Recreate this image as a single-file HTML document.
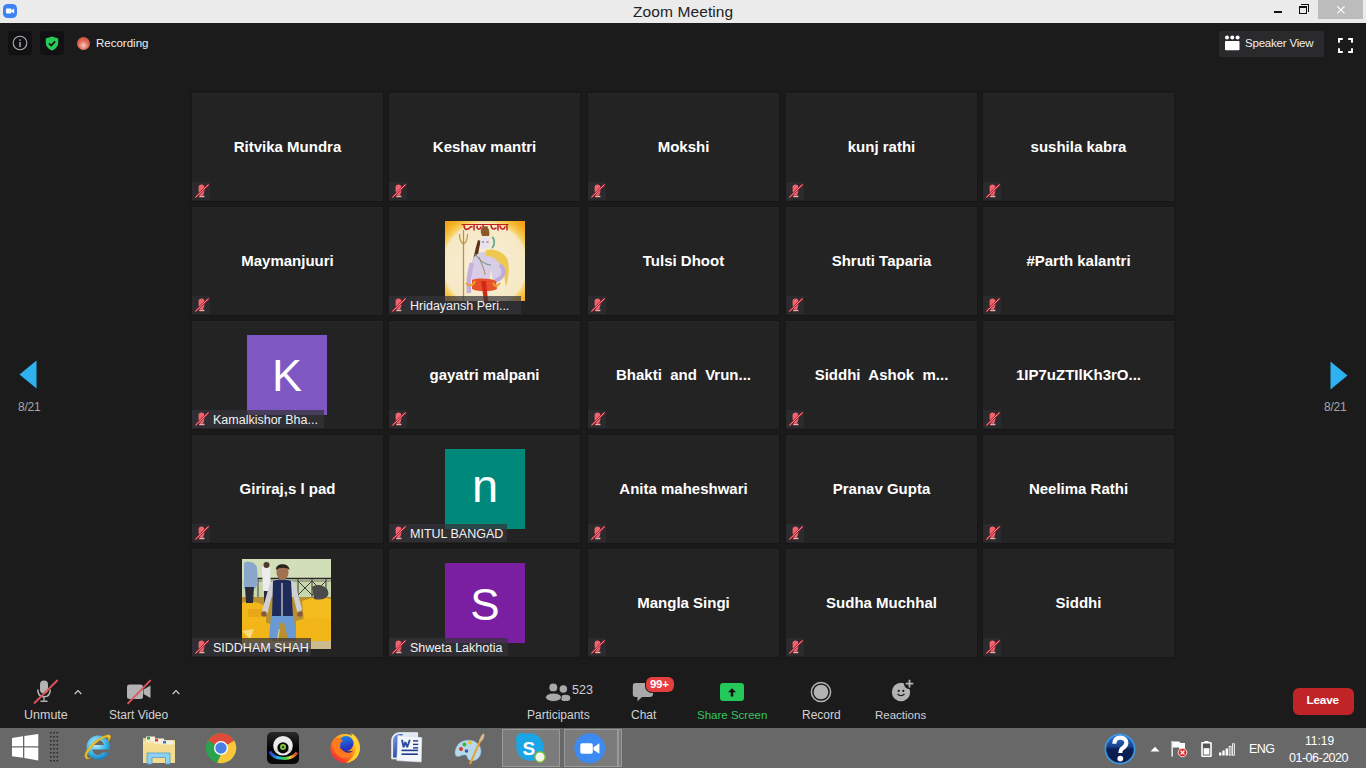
<!DOCTYPE html>
<html><head><meta charset="utf-8">
<style>
*{margin:0;padding:0;box-sizing:border-box}
html,body{width:1366px;height:768px;overflow:hidden;background:#1b1b1c;font-family:"Liberation Sans",sans-serif;position:relative}
.a{position:absolute}
svg{display:block}
#title{left:0;top:0;width:1366px;height:23px;background:#ebebeb}
#title .t{left:633px;top:3px;font-size:15.5px;color:#222;letter-spacing:0.1px;white-space:nowrap}
.tile{position:absolute;width:191px;height:108px;background:#232324;border-top:1px solid #262627;box-shadow:0 0 0 1px #171718,0 0 0 3px #1a1a1b}
.nm{position:absolute;left:0;top:44px;width:191px;text-align:center;color:#fff;font-weight:bold;font-size:15px;line-height:18px;white-space:nowrap}
.mic{position:absolute;left:0;top:88px;width:18px;height:18px;background:#2b2a2d}
.mic svg,.mic2 svg{position:absolute;left:0;top:0}
.mic2{position:absolute;left:0;top:0;width:19px;height:19px}
.lbl{position:absolute;left:0;top:88px;height:18px;background:rgba(52,51,55,0.72)}
.lbl span{position:absolute;left:21px;top:3px;color:#f2f2f2;font-size:12.5px;white-space:nowrap}
.av{position:absolute;left:55px;top:13px;width:80px;height:80px;color:#fff;font-size:46px;text-align:center;line-height:80px}
.tb{position:absolute;color:#d2d2d2;font-size:12px;white-space:nowrap;line-height:14px}
.tk{position:absolute;top:728px}
</style></head><body>
<div id="title" class="a">
  <svg class="a" style="left:3px;top:4px" width="14" height="14" viewBox="0 0 14 14"><rect x="0" y="0" width="14" height="14" rx="4.5" fill="#3d83f3"/><rect x="3" y="4.6" width="5.6" height="4.8" rx="0.8" fill="#fff"/><path d="M8.4 6.4 L11.2 4.6 V9.4 L8.4 7.6Z" fill="#fff"/></svg>
  <div class="a t">Zoom Meeting</div>
  <div class="a" style="left:1274px;top:11px;width:8px;height:2px;background:#111"></div>
  <div class="a" style="left:1301px;top:4px;width:8px;height:8px;border:1px solid #111;border-left:none;border-bottom:none"></div>
  <div class="a" style="left:1299px;top:6px;width:8px;height:8px;border:1px solid #111;border-top-width:2px;background:#ebebeb"></div>
  <div class="a" style="left:1318px;top:0;width:45px;height:19px;background:#bdbcbd"></div>
  <svg class="a" style="left:1336px;top:6px" width="10" height="8" viewBox="0 0 10 8"><path d="M1.2 0.3 L8.6 7.3 M8.6 0.3 L1.2 7.3" stroke="#fff" stroke-width="1.1"/></svg>
</div>

<!-- top bar -->
<div class="a" style="left:8px;top:31px;width:24px;height:24px;background:#111113;border-radius:4px"></div>
<svg class="a" style="left:12px;top:35px" width="16" height="16" viewBox="0 0 16 16"><circle cx="8" cy="8" r="6.8" fill="none" stroke="#b4b4b4" stroke-width="1.1"/><rect x="7.3" y="7" width="1.4" height="5" fill="#b4b4b4"/><circle cx="8" cy="5" r="0.85" fill="#b4b4b4"/></svg>
<div class="a" style="left:40px;top:31px;width:24px;height:24px;background:#111113;border-radius:4px"></div>
<svg class="a" style="left:45px;top:36px" width="14" height="15" viewBox="0 0 14 15"><path d="M7 0.5 L13.2 2.6 V7 C13.2 10.6 10.4 13.2 7 14.5 C3.6 13.2 0.8 10.6 0.8 7 V2.6Z" fill="#29c95a"/><path d="M4 7.4 L6.2 9.6 L10.2 5.4" fill="none" stroke="#111" stroke-width="1.6"/></svg>
<div class="a" style="left:77px;top:37px;width:13px;height:13px;border-radius:50%;background:radial-gradient(circle at 50% 65%,#f4c9c0 0%,#e36a55 45%,#b8402f 100%)"></div>
<div class="tb" style="left:96px;top:36px;font-size:11.5px;color:#f0f0f0">Recording</div>

<div class="a" style="left:1219px;top:31px;width:105px;height:26px;background:#2a2a2c;border-radius:2px"></div>
<svg class="a" style="left:1225px;top:35px" width="15" height="16" viewBox="0 0 15 16"><circle cx="2" cy="2.6" r="2" fill="#fff"/><circle cx="7.3" cy="2.6" r="2" fill="#fff"/><circle cx="12.6" cy="2.6" r="2" fill="#fff"/><rect x="0" y="6" width="14.5" height="9.3" rx="0.8" fill="#fff"/></svg>
<div class="tb" style="left:1245px;top:36px;font-size:11.5px;color:#f0f0f0;letter-spacing:-0.2px">Speaker View</div>
<svg class="a" style="left:1337.5px;top:37.5px" width="15" height="15" viewBox="0 0 15 15"><path d="M1 4.8 V1 H4.8 M10.2 1 H14 V4.8 M14 10.2 V14 H10.2 M4.8 14 H1 V10.2" fill="none" stroke="#fff" stroke-width="1.9"/></svg>

<!-- arrows -->
<svg class="a" style="left:18.5px;top:360px" width="18" height="29" viewBox="0 0 18 29"><path d="M0.5 14.5 L17.5 0.5 V28.5Z" fill="#2eb1f0"/></svg>
<div class="tb" style="left:18px;top:400px;font-size:12px;letter-spacing:-0.2px;color:#a6a6a6">8/21</div>
<svg class="a" style="left:1330px;top:361px" width="18" height="29" viewBox="0 0 18 29"><path d="M17.5 14.5 L0.5 0.5 V28.5Z" fill="#2eb1f0"/></svg>
<div class="tb" style="left:1324px;top:400px;font-size:12px;letter-spacing:-0.2px;color:#a6a6a6">8/21</div>

<div class="tile" style="left:192px;top:93px"><div class="nm">Ritvika Mundra</div><div class="mic"><svg width="19" height="18" viewBox="0 0 19 18"><path d="M6.6 5 C6.6 3.2 7.8 2.4 9.5 2.4 C11.2 2.4 12.4 3.2 12.4 5 V8.5 C12.4 10.5 11.6 11.8 11 13.4 H8 C7.4 11.8 6.6 10.5 6.6 8.5Z" fill="#f0646e"/><rect x="7.2" y="13.7" width="5.2" height="1.5" fill="#f4a8a8"/><path d="M3.4 15.4 L16.6 2.5" stroke="#a81c2c" stroke-width="2.1"/><path d="M3.4 15.4 L16.6 2.5" stroke="#ff98a0" stroke-width="0.9"/></svg></div></div>
<div class="tile" style="left:389px;top:93px"><div class="nm">Keshav mantri</div><div class="mic"><svg width="19" height="18" viewBox="0 0 19 18"><path d="M6.6 5 C6.6 3.2 7.8 2.4 9.5 2.4 C11.2 2.4 12.4 3.2 12.4 5 V8.5 C12.4 10.5 11.6 11.8 11 13.4 H8 C7.4 11.8 6.6 10.5 6.6 8.5Z" fill="#f0646e"/><rect x="7.2" y="13.7" width="5.2" height="1.5" fill="#f4a8a8"/><path d="M3.4 15.4 L16.6 2.5" stroke="#a81c2c" stroke-width="2.1"/><path d="M3.4 15.4 L16.6 2.5" stroke="#ff98a0" stroke-width="0.9"/></svg></div></div>
<div class="tile" style="left:588px;top:93px"><div class="nm">Mokshi</div><div class="mic"><svg width="19" height="18" viewBox="0 0 19 18"><path d="M6.6 5 C6.6 3.2 7.8 2.4 9.5 2.4 C11.2 2.4 12.4 3.2 12.4 5 V8.5 C12.4 10.5 11.6 11.8 11 13.4 H8 C7.4 11.8 6.6 10.5 6.6 8.5Z" fill="#f0646e"/><rect x="7.2" y="13.7" width="5.2" height="1.5" fill="#f4a8a8"/><path d="M3.4 15.4 L16.6 2.5" stroke="#a81c2c" stroke-width="2.1"/><path d="M3.4 15.4 L16.6 2.5" stroke="#ff98a0" stroke-width="0.9"/></svg></div></div>
<div class="tile" style="left:786px;top:93px"><div class="nm">kunj rathi</div><div class="mic"><svg width="19" height="18" viewBox="0 0 19 18"><path d="M6.6 5 C6.6 3.2 7.8 2.4 9.5 2.4 C11.2 2.4 12.4 3.2 12.4 5 V8.5 C12.4 10.5 11.6 11.8 11 13.4 H8 C7.4 11.8 6.6 10.5 6.6 8.5Z" fill="#f0646e"/><rect x="7.2" y="13.7" width="5.2" height="1.5" fill="#f4a8a8"/><path d="M3.4 15.4 L16.6 2.5" stroke="#a81c2c" stroke-width="2.1"/><path d="M3.4 15.4 L16.6 2.5" stroke="#ff98a0" stroke-width="0.9"/></svg></div></div>
<div class="tile" style="left:983px;top:93px"><div class="nm">sushila kabra</div><div class="mic"><svg width="19" height="18" viewBox="0 0 19 18"><path d="M6.6 5 C6.6 3.2 7.8 2.4 9.5 2.4 C11.2 2.4 12.4 3.2 12.4 5 V8.5 C12.4 10.5 11.6 11.8 11 13.4 H8 C7.4 11.8 6.6 10.5 6.6 8.5Z" fill="#f0646e"/><rect x="7.2" y="13.7" width="5.2" height="1.5" fill="#f4a8a8"/><path d="M3.4 15.4 L16.6 2.5" stroke="#a81c2c" stroke-width="2.1"/><path d="M3.4 15.4 L16.6 2.5" stroke="#ff98a0" stroke-width="0.9"/></svg></div></div>
<div class="tile" style="left:192px;top:207px"><div class="nm">Maymanjuuri</div><div class="mic"><svg width="19" height="18" viewBox="0 0 19 18"><path d="M6.6 5 C6.6 3.2 7.8 2.4 9.5 2.4 C11.2 2.4 12.4 3.2 12.4 5 V8.5 C12.4 10.5 11.6 11.8 11 13.4 H8 C7.4 11.8 6.6 10.5 6.6 8.5Z" fill="#f0646e"/><rect x="7.2" y="13.7" width="5.2" height="1.5" fill="#f4a8a8"/><path d="M3.4 15.4 L16.6 2.5" stroke="#a81c2c" stroke-width="2.1"/><path d="M3.4 15.4 L16.6 2.5" stroke="#ff98a0" stroke-width="0.9"/></svg></div></div>
<div class="tile" style="left:588px;top:207px"><div class="nm">Tulsi Dhoot</div><div class="mic"><svg width="19" height="18" viewBox="0 0 19 18"><path d="M6.6 5 C6.6 3.2 7.8 2.4 9.5 2.4 C11.2 2.4 12.4 3.2 12.4 5 V8.5 C12.4 10.5 11.6 11.8 11 13.4 H8 C7.4 11.8 6.6 10.5 6.6 8.5Z" fill="#f0646e"/><rect x="7.2" y="13.7" width="5.2" height="1.5" fill="#f4a8a8"/><path d="M3.4 15.4 L16.6 2.5" stroke="#a81c2c" stroke-width="2.1"/><path d="M3.4 15.4 L16.6 2.5" stroke="#ff98a0" stroke-width="0.9"/></svg></div></div>
<div class="tile" style="left:786px;top:207px"><div class="nm">Shruti Taparia</div><div class="mic"><svg width="19" height="18" viewBox="0 0 19 18"><path d="M6.6 5 C6.6 3.2 7.8 2.4 9.5 2.4 C11.2 2.4 12.4 3.2 12.4 5 V8.5 C12.4 10.5 11.6 11.8 11 13.4 H8 C7.4 11.8 6.6 10.5 6.6 8.5Z" fill="#f0646e"/><rect x="7.2" y="13.7" width="5.2" height="1.5" fill="#f4a8a8"/><path d="M3.4 15.4 L16.6 2.5" stroke="#a81c2c" stroke-width="2.1"/><path d="M3.4 15.4 L16.6 2.5" stroke="#ff98a0" stroke-width="0.9"/></svg></div></div>
<div class="tile" style="left:983px;top:207px"><div class="nm">#Parth kalantri</div><div class="mic"><svg width="19" height="18" viewBox="0 0 19 18"><path d="M6.6 5 C6.6 3.2 7.8 2.4 9.5 2.4 C11.2 2.4 12.4 3.2 12.4 5 V8.5 C12.4 10.5 11.6 11.8 11 13.4 H8 C7.4 11.8 6.6 10.5 6.6 8.5Z" fill="#f0646e"/><rect x="7.2" y="13.7" width="5.2" height="1.5" fill="#f4a8a8"/><path d="M3.4 15.4 L16.6 2.5" stroke="#a81c2c" stroke-width="2.1"/><path d="M3.4 15.4 L16.6 2.5" stroke="#ff98a0" stroke-width="0.9"/></svg></div></div>
<div class="tile" style="left:389px;top:321px"><div class="nm">gayatri malpani</div><div class="mic"><svg width="19" height="18" viewBox="0 0 19 18"><path d="M6.6 5 C6.6 3.2 7.8 2.4 9.5 2.4 C11.2 2.4 12.4 3.2 12.4 5 V8.5 C12.4 10.5 11.6 11.8 11 13.4 H8 C7.4 11.8 6.6 10.5 6.6 8.5Z" fill="#f0646e"/><rect x="7.2" y="13.7" width="5.2" height="1.5" fill="#f4a8a8"/><path d="M3.4 15.4 L16.6 2.5" stroke="#a81c2c" stroke-width="2.1"/><path d="M3.4 15.4 L16.6 2.5" stroke="#ff98a0" stroke-width="0.9"/></svg></div></div>
<div class="tile" style="left:588px;top:321px"><div class="nm">Bhakti&nbsp; and&nbsp; Vrun...</div><div class="mic"><svg width="19" height="18" viewBox="0 0 19 18"><path d="M6.6 5 C6.6 3.2 7.8 2.4 9.5 2.4 C11.2 2.4 12.4 3.2 12.4 5 V8.5 C12.4 10.5 11.6 11.8 11 13.4 H8 C7.4 11.8 6.6 10.5 6.6 8.5Z" fill="#f0646e"/><rect x="7.2" y="13.7" width="5.2" height="1.5" fill="#f4a8a8"/><path d="M3.4 15.4 L16.6 2.5" stroke="#a81c2c" stroke-width="2.1"/><path d="M3.4 15.4 L16.6 2.5" stroke="#ff98a0" stroke-width="0.9"/></svg></div></div>
<div class="tile" style="left:786px;top:321px"><div class="nm">Siddhi&nbsp; Ashok&nbsp; m...</div><div class="mic"><svg width="19" height="18" viewBox="0 0 19 18"><path d="M6.6 5 C6.6 3.2 7.8 2.4 9.5 2.4 C11.2 2.4 12.4 3.2 12.4 5 V8.5 C12.4 10.5 11.6 11.8 11 13.4 H8 C7.4 11.8 6.6 10.5 6.6 8.5Z" fill="#f0646e"/><rect x="7.2" y="13.7" width="5.2" height="1.5" fill="#f4a8a8"/><path d="M3.4 15.4 L16.6 2.5" stroke="#a81c2c" stroke-width="2.1"/><path d="M3.4 15.4 L16.6 2.5" stroke="#ff98a0" stroke-width="0.9"/></svg></div></div>
<div class="tile" style="left:983px;top:321px"><div class="nm">1IP7uZTIlKh3rO...</div><div class="mic"><svg width="19" height="18" viewBox="0 0 19 18"><path d="M6.6 5 C6.6 3.2 7.8 2.4 9.5 2.4 C11.2 2.4 12.4 3.2 12.4 5 V8.5 C12.4 10.5 11.6 11.8 11 13.4 H8 C7.4 11.8 6.6 10.5 6.6 8.5Z" fill="#f0646e"/><rect x="7.2" y="13.7" width="5.2" height="1.5" fill="#f4a8a8"/><path d="M3.4 15.4 L16.6 2.5" stroke="#a81c2c" stroke-width="2.1"/><path d="M3.4 15.4 L16.6 2.5" stroke="#ff98a0" stroke-width="0.9"/></svg></div></div>
<div class="tile" style="left:192px;top:435px"><div class="nm">Giriraj,s l pad</div><div class="mic"><svg width="19" height="18" viewBox="0 0 19 18"><path d="M6.6 5 C6.6 3.2 7.8 2.4 9.5 2.4 C11.2 2.4 12.4 3.2 12.4 5 V8.5 C12.4 10.5 11.6 11.8 11 13.4 H8 C7.4 11.8 6.6 10.5 6.6 8.5Z" fill="#f0646e"/><rect x="7.2" y="13.7" width="5.2" height="1.5" fill="#f4a8a8"/><path d="M3.4 15.4 L16.6 2.5" stroke="#a81c2c" stroke-width="2.1"/><path d="M3.4 15.4 L16.6 2.5" stroke="#ff98a0" stroke-width="0.9"/></svg></div></div>
<div class="tile" style="left:588px;top:435px"><div class="nm">Anita maheshwari</div><div class="mic"><svg width="19" height="18" viewBox="0 0 19 18"><path d="M6.6 5 C6.6 3.2 7.8 2.4 9.5 2.4 C11.2 2.4 12.4 3.2 12.4 5 V8.5 C12.4 10.5 11.6 11.8 11 13.4 H8 C7.4 11.8 6.6 10.5 6.6 8.5Z" fill="#f0646e"/><rect x="7.2" y="13.7" width="5.2" height="1.5" fill="#f4a8a8"/><path d="M3.4 15.4 L16.6 2.5" stroke="#a81c2c" stroke-width="2.1"/><path d="M3.4 15.4 L16.6 2.5" stroke="#ff98a0" stroke-width="0.9"/></svg></div></div>
<div class="tile" style="left:786px;top:435px"><div class="nm">Pranav Gupta</div><div class="mic"><svg width="19" height="18" viewBox="0 0 19 18"><path d="M6.6 5 C6.6 3.2 7.8 2.4 9.5 2.4 C11.2 2.4 12.4 3.2 12.4 5 V8.5 C12.4 10.5 11.6 11.8 11 13.4 H8 C7.4 11.8 6.6 10.5 6.6 8.5Z" fill="#f0646e"/><rect x="7.2" y="13.7" width="5.2" height="1.5" fill="#f4a8a8"/><path d="M3.4 15.4 L16.6 2.5" stroke="#a81c2c" stroke-width="2.1"/><path d="M3.4 15.4 L16.6 2.5" stroke="#ff98a0" stroke-width="0.9"/></svg></div></div>
<div class="tile" style="left:983px;top:435px"><div class="nm">Neelima Rathi</div><div class="mic"><svg width="19" height="18" viewBox="0 0 19 18"><path d="M6.6 5 C6.6 3.2 7.8 2.4 9.5 2.4 C11.2 2.4 12.4 3.2 12.4 5 V8.5 C12.4 10.5 11.6 11.8 11 13.4 H8 C7.4 11.8 6.6 10.5 6.6 8.5Z" fill="#f0646e"/><rect x="7.2" y="13.7" width="5.2" height="1.5" fill="#f4a8a8"/><path d="M3.4 15.4 L16.6 2.5" stroke="#a81c2c" stroke-width="2.1"/><path d="M3.4 15.4 L16.6 2.5" stroke="#ff98a0" stroke-width="0.9"/></svg></div></div>
<div class="tile" style="left:588px;top:549px"><div class="nm">Mangla Singi</div><div class="mic"><svg width="19" height="18" viewBox="0 0 19 18"><path d="M6.6 5 C6.6 3.2 7.8 2.4 9.5 2.4 C11.2 2.4 12.4 3.2 12.4 5 V8.5 C12.4 10.5 11.6 11.8 11 13.4 H8 C7.4 11.8 6.6 10.5 6.6 8.5Z" fill="#f0646e"/><rect x="7.2" y="13.7" width="5.2" height="1.5" fill="#f4a8a8"/><path d="M3.4 15.4 L16.6 2.5" stroke="#a81c2c" stroke-width="2.1"/><path d="M3.4 15.4 L16.6 2.5" stroke="#ff98a0" stroke-width="0.9"/></svg></div></div>
<div class="tile" style="left:786px;top:549px"><div class="nm">Sudha Muchhal</div><div class="mic"><svg width="19" height="18" viewBox="0 0 19 18"><path d="M6.6 5 C6.6 3.2 7.8 2.4 9.5 2.4 C11.2 2.4 12.4 3.2 12.4 5 V8.5 C12.4 10.5 11.6 11.8 11 13.4 H8 C7.4 11.8 6.6 10.5 6.6 8.5Z" fill="#f0646e"/><rect x="7.2" y="13.7" width="5.2" height="1.5" fill="#f4a8a8"/><path d="M3.4 15.4 L16.6 2.5" stroke="#a81c2c" stroke-width="2.1"/><path d="M3.4 15.4 L16.6 2.5" stroke="#ff98a0" stroke-width="0.9"/></svg></div></div>
<div class="tile" style="left:983px;top:549px"><div class="nm">Siddhi</div><div class="mic"><svg width="19" height="18" viewBox="0 0 19 18"><path d="M6.6 5 C6.6 3.2 7.8 2.4 9.5 2.4 C11.2 2.4 12.4 3.2 12.4 5 V8.5 C12.4 10.5 11.6 11.8 11 13.4 H8 C7.4 11.8 6.6 10.5 6.6 8.5Z" fill="#f0646e"/><rect x="7.2" y="13.7" width="5.2" height="1.5" fill="#f4a8a8"/><path d="M3.4 15.4 L16.6 2.5" stroke="#a81c2c" stroke-width="2.1"/><path d="M3.4 15.4 L16.6 2.5" stroke="#ff98a0" stroke-width="0.9"/></svg></div></div>
<div class="tile" style="left:389px;top:207px"><div class="av" style="left:56px;top:13px;overflow:hidden"><svg width="80" height="80" viewBox="0 0 80 80" style="position:absolute;left:0;top:0">
<defs>
<radialGradient id="halo" cx="0.5" cy="0.55" r="0.72"><stop offset="0" stop-color="#f8f0dc"/><stop offset="0.72" stop-color="#f6e8c4"/><stop offset="0.78" stop-color="#f8d060"/><stop offset="0.9" stop-color="#f5b025"/><stop offset="1" stop-color="#f2a018"/></radialGradient>
</defs>
<rect width="80" height="80" fill="url(#halo)"/>
<g stroke="#c41e1e" fill="none" stroke-linecap="round">
<path d="M17 3.5 H63" stroke-width="1"/>
<path d="M19 4 C19 8 21 9 23 8 C25 7 25 5 27 6 M29 4 V9 M32 5 C32 9 35 9 36 6 M38 4 C38 8 41 9 42 6" stroke-width="1.5"/>
<path d="M46 4 C46 8 49 9 51 7 M53 4 V9 M55 5 C56 9 59 9 60 6 M62 4 V9" stroke-width="1.5"/>
</g>
<path d="M18.5 12 V80" stroke="#b8943e" stroke-width="1.3"/>
<path d="M14.5 13 C14.5 19 16.5 22 18.5 23 C20.5 22 22.5 19 22.5 13 M18.5 12 V9" stroke="#b8943e" stroke-width="1.1" fill="none"/>
<path d="M36 12 C35 7 38 4.5 41 5.5 C44 7 45 11 44 15 H37Z" fill="#8a5a2c"/>
<path d="M33 19 C31 25 29 34 28 40 L33 40 C33 33 34 26 36 20Z" fill="#5a3418"/>
<ellipse cx="40" cy="22" rx="5" ry="6.8" fill="#ebe2f0"/>
<path d="M37 21 H39 M41.5 21 H43.5" stroke="#4a3a5a" stroke-width="0.8"/>
<path d="M47 16 C50 18 50 24 47 27" stroke="#6aa898" stroke-width="1.8" fill="none"/>
<path d="M27 40 C30 33 35 30.5 41 30.5 C48 30.5 53 33 56 38 C60 44 59 52 56 58 L48 60 L46 48 L44 62 H28 C25 55 25 47 27 40Z" fill="#d8cce6"/>
<path d="M41 29 C49 27 58 31 62 37 C65 45 64 56 61 66 C59 58 60 50 56 44 C52 38 47 35 41 35Z" fill="#eec850"/>
<path d="M30 33 C35 40 40 44 46 44" stroke="#7aa08a" stroke-width="1.1" fill="none"/>
<path d="M34 36 C37 44 40 50 40 54" stroke="#a08a60" stroke-width="1" fill="none"/>
<path d="M27 42 C24 52 23 62 24 72" stroke="#c5b0dc" stroke-width="4.5" fill="none"/>
<path d="M55 44 C60 48 60 54 54 58 L47 62" stroke="#c0aad8" stroke-width="4" fill="none"/>
<path d="M27 59 C33 57 44 57 51 60 L52 68 C46 71 33 71 27 68Z" fill="#e8502a"/>
<path d="M36 60 L39 80 L43 80 L41 60Z" fill="#d22818"/>
<path d="M21 62 C25 66 28 65 30 60 M48 62 C50 66 52 66 55 62" stroke="#eaa028" stroke-width="2" fill="none"/>
</svg>
</div><div class="lbl" style="width:132px"><div class="mic2"><svg width="19" height="18" viewBox="0 0 19 18"><path d="M6.6 5 C6.6 3.2 7.8 2.4 9.5 2.4 C11.2 2.4 12.4 3.2 12.4 5 V8.5 C12.4 10.5 11.6 11.8 11 13.4 H8 C7.4 11.8 6.6 10.5 6.6 8.5Z" fill="#f0646e"/><rect x="7.2" y="13.7" width="5.2" height="1.5" fill="#f4a8a8"/><path d="M3.4 15.4 L16.6 2.5" stroke="#a81c2c" stroke-width="2.1"/><path d="M3.4 15.4 L16.6 2.5" stroke="#ff98a0" stroke-width="0.9"/></svg></div><span>Hridayansh Peri...</span></div></div>
<div class="tile" style="left:192px;top:321px"><div class="av" style="background:#7e57c2;font-size:45px;line-height:82px">K</div><div class="lbl" style="width:132px"><div class="mic2"><svg width="19" height="18" viewBox="0 0 19 18"><path d="M6.6 5 C6.6 3.2 7.8 2.4 9.5 2.4 C11.2 2.4 12.4 3.2 12.4 5 V8.5 C12.4 10.5 11.6 11.8 11 13.4 H8 C7.4 11.8 6.6 10.5 6.6 8.5Z" fill="#f0646e"/><rect x="7.2" y="13.7" width="5.2" height="1.5" fill="#f4a8a8"/><path d="M3.4 15.4 L16.6 2.5" stroke="#a81c2c" stroke-width="2.1"/><path d="M3.4 15.4 L16.6 2.5" stroke="#ff98a0" stroke-width="0.9"/></svg></div><span>Kamalkishor Bha...</span></div></div>
<div class="tile" style="left:389px;top:435px"><div class="av" style="left:56px;background:#00897b;font-size:47px;line-height:74px">n</div><div class="lbl" style="width:118px"><div class="mic2"><svg width="19" height="18" viewBox="0 0 19 18"><path d="M6.6 5 C6.6 3.2 7.8 2.4 9.5 2.4 C11.2 2.4 12.4 3.2 12.4 5 V8.5 C12.4 10.5 11.6 11.8 11 13.4 H8 C7.4 11.8 6.6 10.5 6.6 8.5Z" fill="#f0646e"/><rect x="7.2" y="13.7" width="5.2" height="1.5" fill="#f4a8a8"/><path d="M3.4 15.4 L16.6 2.5" stroke="#a81c2c" stroke-width="2.1"/><path d="M3.4 15.4 L16.6 2.5" stroke="#ff98a0" stroke-width="0.9"/></svg></div><span>MITUL BANGAD</span></div></div>
<div class="tile" style="left:192px;top:549px"><div class="av" style="left:50px;top:9px;width:89px;height:90px;overflow:hidden"><svg width="89" height="90" viewBox="0 0 89 90" style="position:absolute;left:0;top:0">
<rect width="89" height="90" fill="#c8d6ac"/>
<rect y="0" width="89" height="20" fill="#d2deb8"/>
<path d="M12 19.5 H89" stroke="#2a2a28" stroke-width="1.6"/>
<path d="M12 22 H89" stroke="#5a5a50" stroke-width="0.8"/>
<path d="M16 20 V40 M26 20 V40 M56 20 V40 M70 20 V40 M84 20 V40 M56 22 L70 36 M70 22 L56 36 M70 22 L84 36 M84 22 L70 36" stroke="#3a3a36" stroke-width="1"/>
<rect y="38" width="89" height="52" fill="#b89030"/>
<path d="M0 44 C8 41 18 43 24 48 L24 66 L0 68Z" fill="#f2b81a"/>
<path d="M6 50 H20 V58 H6Z" fill="#e8a818"/>
<path d="M60 42 C70 38 82 38 89 40 V60 L62 64Z" fill="#f4bc1e"/>
<path d="M0 64 C8 60 22 62 30 66 L30 84 H0Z" fill="#f2b618"/>
<path d="M54 62 C64 58 80 58 89 60 V84 H54Z" fill="#f2b618"/>
<path d="M0 72 L8 80 L12 70Z M30 70 L36 82 L38 70Z" fill="#fff2c0" opacity="0.6"/>
<rect y="82" width="89" height="8" fill="#cdbb90"/>
<path d="M2 4 C5 2 12 2 15 8 L16 24 L13 30 H2Z" fill="#8aa8cc"/>
<path d="M3 28 H12 L11 44 H4Z" fill="#2a2a38"/>
<path d="M20 9 C21 5 27 5 28 9 L29 32 H21Z" fill="#ececec"/>
<circle cx="24.5" cy="6" r="3" fill="#4a3a2a"/>
<path d="M22 32 H28 V44 H22Z" fill="#2a2a38"/>
<path d="M70 28 C74 24 84 26 86 32 C88 38 82 42 72 40Z" fill="#4a4a4a"/>
<path d="M28 24 C31 21 35 20 40 20 C45 20 50 21 53 24 L60 50 L56 56 L51 36 H30 L25 56 L20 52Z" fill="#d0d0d4"/>
<path d="M31 22 C35 20 45 20 49 22 L51 58 H30Z" fill="#1e2a5a"/>
<path d="M40 24 V58" stroke="#d8d8d8" stroke-width="1.2"/>
<ellipse cx="40.5" cy="13.5" rx="6" ry="7.5" fill="#a07050"/>
<path d="M34 11 C33 4 47 3 47.5 11 C45 8 37 8 34 11Z" fill="#2a2420"/>
<path d="M29 57 H52 L54 80 H46 L42 64 L38 64 L35 80 H27Z" fill="#6a9ad4"/>
<circle cx="22" cy="55" r="2.8" fill="#8a5a3a"/><circle cx="58" cy="55" r="2.8" fill="#8a5a3a"/>
</svg>
</div><div class="lbl" style="width:119px"><div class="mic2"><svg width="19" height="18" viewBox="0 0 19 18"><path d="M6.6 5 C6.6 3.2 7.8 2.4 9.5 2.4 C11.2 2.4 12.4 3.2 12.4 5 V8.5 C12.4 10.5 11.6 11.8 11 13.4 H8 C7.4 11.8 6.6 10.5 6.6 8.5Z" fill="#f0646e"/><rect x="7.2" y="13.7" width="5.2" height="1.5" fill="#f4a8a8"/><path d="M3.4 15.4 L16.6 2.5" stroke="#a81c2c" stroke-width="2.1"/><path d="M3.4 15.4 L16.6 2.5" stroke="#ff98a0" stroke-width="0.9"/></svg></div><span>SIDDHAM SHAH</span></div></div>
<div class="tile" style="left:389px;top:549px"><div class="av" style="left:56px;background:#7b1fa2;font-size:44px;line-height:84px">S</div><div class="lbl" style="width:119px"><div class="mic2"><svg width="19" height="18" viewBox="0 0 19 18"><path d="M6.6 5 C6.6 3.2 7.8 2.4 9.5 2.4 C11.2 2.4 12.4 3.2 12.4 5 V8.5 C12.4 10.5 11.6 11.8 11 13.4 H8 C7.4 11.8 6.6 10.5 6.6 8.5Z" fill="#f0646e"/><rect x="7.2" y="13.7" width="5.2" height="1.5" fill="#f4a8a8"/><path d="M3.4 15.4 L16.6 2.5" stroke="#a81c2c" stroke-width="2.1"/><path d="M3.4 15.4 L16.6 2.5" stroke="#ff98a0" stroke-width="0.9"/></svg></div><span>Shweta Lakhotia</span></div></div>


<!-- toolbar -->
<svg class="a" style="left:33px;top:679px" width="26" height="26" viewBox="0 0 26 26"><rect x="7" y="1.5" width="8" height="13" rx="4" fill="#b3b3b3"/><path d="M4.8 10.5 C4.8 15.5 7.5 17.8 11 17.8 C14.5 17.8 17.2 15.5 17.2 10.5" fill="none" stroke="#b3b3b3" stroke-width="1.5"/><rect x="10.3" y="17.5" width="1.4" height="4" fill="#b3b3b3"/><rect x="7.5" y="21.5" width="7" height="1.5" fill="#b3b3b3"/><path d="M1 24.5 L24.7 1" stroke="#e0555a" stroke-width="1.8"/></svg>
<svg class="a" style="left:74px;top:689px" width="8" height="6" viewBox="0 0 8 6"><path d="M0.7 5 L4 1.5 L7.3 5" fill="none" stroke="#cfcfcf" stroke-width="1.2"/></svg>
<div class="tb" style="left:24px;top:708px;font-size:12.5px">Unmute</div>

<svg class="a" style="left:126px;top:679px" width="26" height="26" viewBox="0 0 26 26"><rect x="1" y="5.5" width="16" height="14.5" rx="2.5" fill="#b3b3b3"/><path d="M17.5 10.5 L24.5 6.5 V19 L17.5 15Z" fill="#b3b3b3"/><path d="M1.5 24.8 L24.7 1.2" stroke="#e0555a" stroke-width="1.8"/></svg>
<svg class="a" style="left:172px;top:689px" width="8" height="6" viewBox="0 0 8 6"><path d="M0.7 5 L4 1.5 L7.3 5" fill="none" stroke="#cfcfcf" stroke-width="1.2"/></svg>
<div class="tb" style="left:109px;top:708px">Start Video</div>

<svg class="a" style="left:545px;top:682px" width="27" height="20" viewBox="0 0 27 20"><circle cx="8.3" cy="5.4" r="3.95" fill="#a9a9a9"/><circle cx="18.3" cy="7.1" r="3.75" fill="#a9a9a9"/><ellipse cx="20.6" cy="15.9" rx="4.7" ry="3.2" fill="#a9a9a9"/><ellipse cx="8.5" cy="15.3" rx="8" ry="4.2" fill="#a9a9a9" stroke="#1b1b1c" stroke-width="0.9"/></svg>
<div class="tb" style="left:572px;top:683px;font-size:12.5px;color:#cfcfcf">523</div>
<div class="tb" style="left:527px;top:708px">Participants</div>

<svg class="a" style="left:632px;top:682px" width="24" height="20" viewBox="0 0 24 20"><path d="M3.5 1 H18 C19.8 1 21 2.2 21 4 V12 C21 13.8 19.8 15 18 15 H10 L5.5 19.2 V15 H3.5 C1.7 15 0.8 13.8 0.8 12 V4 C0.8 2.2 1.7 1 3.5 1Z" fill="#a9a9a9"/></svg>
<div class="a" style="left:645px;top:675.5px;width:30px;height:17px;border-radius:7px;background:#1b1b1c"></div>
<div class="a" style="left:646px;top:677px;width:27.5px;height:14.5px;border-radius:6px;background:#e53e3e"></div>
<div class="tb" style="left:650px;top:677px;font-size:11.5px;font-weight:bold;color:#fff;letter-spacing:-0.3px">99+</div>
<div class="tb" style="left:631px;top:708px">Chat</div>

<div class="a" style="left:720px;top:683px;width:24px;height:18px;border-radius:3px;background:#25c85a"></div>
<svg class="a" style="left:727px;top:688px" width="10" height="9" viewBox="0 0 10 9"><path d="M5 0.3 L9 4.3 H6.3 V8.6 H3.7 V4.3 H1Z" fill="#111"/></svg>
<div class="tb" style="left:697px;top:708px;color:#34c75c;font-size:11.5px">Share Screen</div>

<svg class="a" style="left:810px;top:681px" width="22" height="22" viewBox="0 0 22 22"><circle cx="11" cy="11" r="9.6" fill="none" stroke="#b3b3b3" stroke-width="1.5"/><circle cx="11" cy="11" r="7.3" fill="#b3b3b3"/></svg>
<div class="tb" style="left:802px;top:708px">Record</div>

<svg class="a" style="left:890px;top:678px" width="24" height="24" viewBox="0 0 24 24"><circle cx="11" cy="14" r="9.2" fill="#b3b3b3"/><circle cx="19.5" cy="5.6" r="5.5" fill="#1b1b1c"/><path d="M19.5 1.8 V9.4 M15.7 5.6 H23.3" stroke="#b3b3b3" stroke-width="1.8"/><circle cx="8.7" cy="12.9" r="1.1" fill="#1b1b1c"/><circle cx="13.3" cy="12.9" r="1.1" fill="#1b1b1c"/><path d="M7.5 15.8 C9.5 18.2 12.5 18.2 14.5 15.8" fill="none" stroke="#1b1b1c" stroke-width="1.3"/></svg>
<div class="tb" style="left:875px;top:708px;font-size:11.5px">Reactions</div>

<div class="a" style="left:1293px;top:688px;width:61px;height:27px;border-radius:6px;background:#c12426"></div>
<div class="tb" style="left:1306.5px;top:693px;font-size:11.8px;font-weight:bold;color:#fff;letter-spacing:-0.2px">Leave</div>

<!-- taskbar -->
<div class="a" style="left:0;top:728px;width:1366px;height:40px;background:#696869"></div>
<svg class="tk" style="left:11px;top:733px" width="28" height="29" viewBox="0 0 28 29"><path d="M1 5 L12 3.3 V13.3 H1Z M13.3 3.1 L27.3 1 V13.3 H13.3Z M1 14.6 H12 V24.8 L1 23.2Z M13.3 14.6 H27.3 V27.5 L13.3 25Z" fill="#fff"/></svg>
<svg class="tk" style="left:50px;top:732px" width="9" height="31" viewBox="0 0 9 31"><g fill="#222">
<rect x="0" y="0" width="1.4" height="1.4"/><rect x="3.3" y="0" width="1.4" height="1.4"/><rect x="6.6" y="0" width="1.4" height="1.4"/>
<rect x="0" y="4" width="1.4" height="1.4"/><rect x="3.3" y="4" width="1.4" height="1.4"/><rect x="6.6" y="4" width="1.4" height="1.4"/>
<rect x="0" y="8" width="1.4" height="1.4"/><rect x="3.3" y="8" width="1.4" height="1.4"/><rect x="6.6" y="8" width="1.4" height="1.4"/>
<rect x="0" y="12" width="1.4" height="1.4"/><rect x="3.3" y="12" width="1.4" height="1.4"/><rect x="6.6" y="12" width="1.4" height="1.4"/>
<rect x="0" y="16" width="1.4" height="1.4"/><rect x="3.3" y="16" width="1.4" height="1.4"/><rect x="6.6" y="16" width="1.4" height="1.4"/>
<rect x="0" y="20" width="1.4" height="1.4"/><rect x="3.3" y="20" width="1.4" height="1.4"/><rect x="6.6" y="20" width="1.4" height="1.4"/>
<rect x="0" y="24" width="1.4" height="1.4"/><rect x="3.3" y="24" width="1.4" height="1.4"/><rect x="6.6" y="24" width="1.4" height="1.4"/>
<rect x="0" y="28" width="1.4" height="1.4"/><rect x="3.3" y="28" width="1.4" height="1.4"/><rect x="6.6" y="28" width="1.4" height="1.4"/>
</g></svg>
<svg class="tk" style="left:82px;top:732px" width="30" height="30" viewBox="0 0 30 30">
<defs><radialGradient id="ieg" cx="0.4" cy="0.35" r="0.7"><stop offset="0" stop-color="#bff0ff"/><stop offset="0.6" stop-color="#3cb8ea"/><stop offset="1" stop-color="#1478c0"/></radialGradient></defs>
<path d="M16 3.5 C9.5 3.5 4.5 8.5 4.5 15.5 C4.5 22.5 9.5 27.5 16.5 27.5 C21.5 27.5 25.5 24.8 27.2 20.5 H20.5 C19.5 22 18 23 16.2 23 C13 23 10.5 20.7 10.2 17.5 H28 C28.2 16.8 28.2 16 28.2 15.5 C28.2 8.5 23 3.5 16 3.5Z M10.4 13 C11 10 13.3 8 16.2 8 C19.1 8 21.4 10 22 13Z" fill="url(#ieg)"/>
<path d="M3.5 26 C0.5 22 9 11 17 6.5 C24.5 2.2 29 1.5 28.6 5 C28.4 7 26.5 9 25 10.5 C27.3 6.5 26.8 4.2 23 5.5 C16.5 7.8 6.5 17 5 23 C4.5 25.5 6 26.5 8.5 26 C6 27.6 4.5 27.3 3.5 26Z" fill="#f1c232" stroke="#c99a10" stroke-width="0.5"/>
</svg>
<svg class="tk" style="left:142px;top:735px" width="34" height="30" viewBox="0 0 34 30">
<path d="M1 3 H12 L14 5 H33 V28 H1Z" fill="#e9cf7c"/>
<rect x="1" y="6" width="32" height="22" fill="#f7e3a0"/>
<rect x="4" y="1.5" width="9" height="5" fill="#f5f0e0"/><rect x="5" y="2" width="3" height="2.5" fill="#27a83a"/>
<rect x="12" y="3.5" width="10" height="5" fill="#f5f0e0"/><rect x="13" y="4" width="3" height="2.5" fill="#d0402a"/>
<rect x="20" y="5.5" width="11" height="5" fill="#f5f0e0"/><rect x="21" y="6" width="3" height="2.5" fill="#2a7ad0"/>
<rect x="1" y="9.5" width="32" height="18.5" fill="#f3dc90"/>
<path d="M5 29 V18 H28 V29 H23.5 V22.5 H10 V29Z" fill="#8fd0f0" stroke="#4aa0d0" stroke-width="0.8"/>
</svg>
<svg class="tk" style="left:205px;top:732px" width="32" height="32" viewBox="0 0 32 32">
<circle cx="16" cy="16" r="15.2" fill="#2aa24e"/>
<path d="M16 16 L3 8.4 A15.2 15.2 0 0 1 29.2 8.4Z" fill="#e04a3a"/>
<path d="M16 16 L29.2 8.4 A15.2 15.2 0 0 1 16 31.2Z" fill="#f8c73a"/>
<path d="M16 16 L29.2 8.4 L16 8.4Z" fill="#e04a3a"/>
<path d="M16 16 L16 31.2 L12.2 30.7 L16 22.6Z" fill="#f8c73a"/>
<circle cx="16" cy="16" r="7" fill="#fff"/><circle cx="16" cy="16" r="5.7" fill="#4a80e6"/>
</svg>
<svg class="tk" style="left:267px;top:732px" width="32" height="32" viewBox="0 0 32 32">
<defs><linearGradient id="rb" x1="0" x2="1"><stop offset="0" stop-color="#2a3ad0"/><stop offset="0.3" stop-color="#2ab0e0"/><stop offset="0.55" stop-color="#3ad04a"/><stop offset="0.75" stop-color="#e0d03a"/><stop offset="1" stop-color="#e0302a"/></linearGradient>
<linearGradient id="wcb" x1="0" y1="0" x2="0" y2="1"><stop offset="0" stop-color="#2a2a2a"/><stop offset="0.5" stop-color="#050505"/><stop offset="1" stop-color="#0a0a0a"/></linearGradient></defs>
<rect x="0" y="0" width="32" height="32" rx="5" fill="url(#wcb)"/>
<path d="M3 19.5 C6 28 25 29 30 20.5" fill="none" stroke="url(#rb)" stroke-width="3"/>
<circle cx="16" cy="13.8" r="9.8" fill="#ececec"/>
<path d="M7 16 C9 22 23 22 25 16 C23 20 9 20 7 16Z" fill="#b8b8b8"/>
<circle cx="16" cy="15.8" r="5.6" fill="#0a0a0a"/><circle cx="16" cy="15" r="3" fill="#86c43a"/><circle cx="16" cy="15.2" r="1.1" fill="#1a3a10"/>
</svg>
<svg class="tk" style="left:329px;top:732px" width="32" height="32" viewBox="0 0 32 32">
<defs><linearGradient id="ffa" x1="0.9" y1="0" x2="0.1" y2="1"><stop offset="0" stop-color="#ffe53a"/><stop offset="0.45" stop-color="#ff9a1a"/><stop offset="0.8" stop-color="#f5402a"/><stop offset="1" stop-color="#e0206a"/></linearGradient>
<linearGradient id="ffb" x1="0" y1="0" x2="0.3" y2="1"><stop offset="0" stop-color="#1a8af0"/><stop offset="1" stop-color="#2a2ab8"/></linearGradient></defs>
<circle cx="16" cy="16.5" r="14.6" fill="url(#ffa)"/>
<circle cx="17" cy="11.5" r="7.5" fill="url(#ffb)"/>
<path d="M22 1 C28 4 31 10 31 16 C31 24 25 30 17 31 C23 27 27 22 26.5 16 C26 10 24 6 22 1Z" fill="#ffd030"/>
<path d="M23 3 C26 6 28 10 28 15 C28 11 26 7 23 3Z" fill="#fff080"/>
<path d="M4 8 C6 5.5 9 5 11.5 6.5 L14 9 C11.5 9.5 10.5 12 11.5 14 C9.5 16 11 20 15 21.5 C18.5 23 22 21.5 24 19 C22.5 25 15.5 27.5 10 24.5 C5 21.5 3 14 4 8Z" fill="#ff7a1a"/>
<path d="M12 15 C14 19 20 20 24 18.5 C21 22 15 22 12 15Z" fill="#2a2a90"/>
</svg>
<svg class="tk" style="left:391px;top:732px" width="32" height="31" viewBox="0 0 32 31">
<defs><linearGradient id="wsp" x1="0" y1="0" x2="1" y2="1"><stop offset="0" stop-color="#8aa8e8"/><stop offset="0.6" stop-color="#2a50b0"/><stop offset="1" stop-color="#1a3a98"/></linearGradient></defs>
<path d="M0.8 26.8 V8.5 C0.8 4 4 0.8 8.5 0.8 H26.6 V26.8Z" fill="#dfe6f4" stroke="#f0f4fa" stroke-width="1"/>
<path d="M2 25.5 V8.8 C2 5 5 2 8.8 2 H12 C9.5 6 9 12 8.5 25.5Z" fill="url(#wsp)"/>
<path d="M6.8 3.6 L30.8 5.6 L30.2 30 L5.8 28.6Z" fill="#f3f5fa" stroke="#d8e0ec" stroke-width="0.6"/>
<path d="M11 7.8 L12.6 15.3 L14.4 10 L16.2 15.3 L18.8 7.8" fill="none" stroke="#2c4c9c" stroke-width="1.9" stroke-linejoin="bevel"/>
<rect x="22" y="8.2" width="5.2" height="1.4" fill="#1e3c8c"/><rect x="22" y="11.7" width="5.2" height="1.4" fill="#1e3c8c"/><rect x="22" y="15.2" width="5.2" height="1.4" fill="#1e3c8c"/>
<rect x="10.5" y="17.6" width="16.6" height="1.6" fill="#1e3c8c"/><rect x="10.5" y="21.4" width="16.4" height="1.6" fill="#1e3c8c"/>
</svg>
<svg class="tk" style="left:453px;top:732px" width="33" height="33" viewBox="0 0 33 33">
<path d="M4 14 C7 8 16 7 21 9 C27 12 30 18 27 24 C24 29 19 30 16 28 C13 26 15 23 12 23 C8 23 6 26 3 24 C1 22 2 17 4 14Z" fill="#b8d8ec" stroke="#6a9ab8" stroke-width="0.6"/>
<circle cx="8" cy="17" r="2" fill="#d83a2a"/><circle cx="11.5" cy="12.5" r="2" fill="#3ab83a"/><circle cx="17" cy="10.5" r="2" fill="#f0c030"/><circle cx="13.5" cy="19" r="1.8" fill="#3a5aa8"/>
<path d="M17 32 L27.5 8" stroke="#e8a030" stroke-width="2"/>
<path d="M26 9 C27 5 29 2 31 1.5 C32 3 31 7 28 10Z" fill="#d8b890"/>
</svg>
<div class="tk" style="left:502px;top:729px;width:58px;height:38px;background:#7b7b7b;border:1px solid #9a9a9a"></div>
<svg class="tk" style="left:515px;top:732px" width="32" height="31" viewBox="0 0 32 31">
<path d="M7.5 1 C3.5 1 1 3.8 1 7.5 C1 8.5 1.3 9.5 1.6 10.3 C1.3 11.6 1.2 13 1.2 14.5 C1.2 22.5 7.5 28.8 15.5 28.8 C17 28.8 18.3 28.6 19.6 28.3 C20.5 28.7 21.5 29 22.5 29 C26.3 29 29 26.3 29 22.5 C29 21.5 28.8 20.5 28.4 19.6 C28.7 18.3 28.9 16.9 28.9 15.5 C28.9 7.5 22.6 1.2 14.6 1.2 C13.3 1.2 12 1.4 10.8 1.7 C9.8 1.2 8.7 1 7.5 1Z" fill="#1aa5e6"/>
<text x="7.5" y="22.5" font-family="Liberation Sans" font-weight="bold" font-size="19" fill="#fff">S</text>
<circle cx="25" cy="25" r="5.2" fill="#f4f7e8" stroke="#7ab83a" stroke-width="1.4"/>
</svg>
<div class="tk" style="left:564px;top:729px;width:54px;height:38px;background:#7b7b7b;border:1px solid #9a9a9a"></div>
<svg class="tk" style="left:574px;top:733px" width="32" height="31" viewBox="0 0 32 31">
<ellipse cx="15.7" cy="15.3" rx="15.4" ry="15" fill="#3d8bf2"/>
<rect x="6.3" y="10.3" width="12.5" height="10.5" rx="1.8" fill="#fff"/>
<path d="M19.6 14.2 L25.4 10.3 V20.8 L19.6 17Z" fill="#fff"/>
</svg>
<div class="tk" style="left:618px;top:729px;width:4px;height:38px;background:#7b7b7b;border:1px solid #9a9a9a"></div>
<svg class="tk" style="left:1104px;top:733px" width="32" height="32" viewBox="0 0 32 32">
<defs><linearGradient id="hg" x1="0" y1="0" x2="0" y2="1"><stop offset="0" stop-color="#2a78d0"/><stop offset="0.42" stop-color="#1a3f8a"/><stop offset="0.5" stop-color="#0c1f55"/><stop offset="1" stop-color="#0a1a4a"/></linearGradient></defs>
<circle cx="16" cy="16" r="15.4" fill="#3a9ae8"/>
<circle cx="16" cy="16" r="13.8" fill="url(#hg)"/>
<path d="M10.3 10.8 C10.3 6.6 13 4.6 16.2 4.6 C19.8 4.6 22.3 6.9 22.3 10 C22.3 13.2 19.8 14.3 18 15.7 C16.8 16.6 16.3 17.6 16.3 20" fill="none" stroke="#fff" stroke-width="4.2"/>
<circle cx="16.3" cy="25.6" r="2.9" fill="#fff"/>
</svg>
<svg class="tk" style="left:1150px;top:746px" width="10" height="6" viewBox="0 0 10 6"><path d="M0.5 5.5 L5 0.8 L9.5 5.5Z" fill="#fff"/></svg>
<svg class="tk" style="left:1171px;top:741px" width="17" height="17" viewBox="0 0 17 17">
<rect x="0.5" y="0" width="1.3" height="15.5" fill="#fff"/><path d="M1.8 0.5 H8 L9.5 2 H14 V8 H9 L7.5 6.5 H1.8Z" fill="#fff"/>
<circle cx="11.5" cy="11.5" r="4.3" fill="#e02a2a" stroke="#fff" stroke-width="0.8"/><path d="M9.6 9.6 L13.4 13.4 M13.4 9.6 L9.6 13.4" stroke="#fff" stroke-width="1.3"/>
</svg>
<svg class="tk" style="left:1201px;top:741px" width="11" height="16" viewBox="0 0 11 16"><rect x="3.5" y="0" width="4" height="2" fill="#fff"/><rect x="1" y="1.8" width="9" height="13.4" rx="0.5" fill="#555" stroke="#fff" stroke-width="1.6"/><rect x="2.6" y="7.2" width="5.8" height="6.4" fill="#fff"/></svg>
<svg class="tk" style="left:1219px;top:743px" width="17" height="13" viewBox="0 0 17 13"><rect x="0" y="9.5" width="2.4" height="3" fill="#fff"/><rect x="3.3" y="7.5" width="2.4" height="5" fill="#fff"/><rect x="6.6" y="5.5" width="2.4" height="7" fill="#fff"/><rect x="10.1" y="3.3" width="2" height="8.9" fill="#858585" stroke="#fff" stroke-width="0.8"/><rect x="13.4" y="0.8" width="2" height="11.4" fill="#858585" stroke="#fff" stroke-width="0.8"/></svg>

<div class="tb" style="left:1249px;top:742px;font-size:12.5px;color:#fff;letter-spacing:-0.6px">ENG</div>
<div class="tb" style="left:1305px;top:734px;font-size:12px;color:#fff">11:19</div>
<div class="tb" style="left:1289px;top:751px;font-size:12.5px;color:#fff;letter-spacing:-0.5px">01-06-2020</div>
</body></html>
